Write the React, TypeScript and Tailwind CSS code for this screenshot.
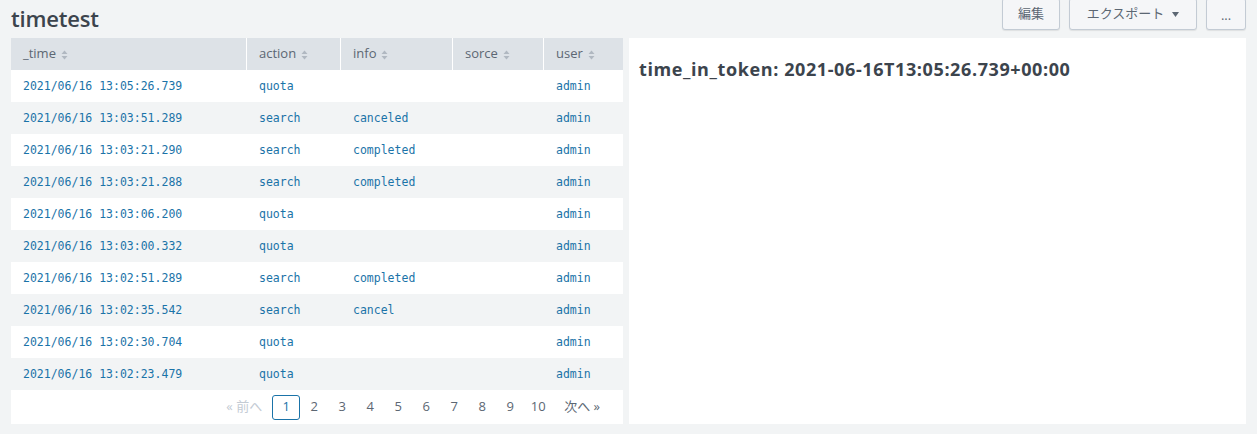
import React from "react";

const rows = [
  ["2021/06/16 13:05:26.739", "quota", "", "", "admin"],
  ["2021/06/16 13:03:51.289", "search", "canceled", "", "admin"],
  ["2021/06/16 13:03:21.290", "search", "completed", "", "admin"],
  ["2021/06/16 13:03:21.288", "search", "completed", "", "admin"],
  ["2021/06/16 13:03:06.200", "quota", "", "", "admin"],
  ["2021/06/16 13:03:00.332", "quota", "", "", "admin"],
  ["2021/06/16 13:02:51.289", "search", "completed", "", "admin"],
  ["2021/06/16 13:02:35.542", "search", "cancel", "", "admin"],
  ["2021/06/16 13:02:30.704", "quota", "", "", "admin"],
  ["2021/06/16 13:02:23.479", "quota", "", "", "admin"],
];

const cols = [
  { name: "_time", w: "w-[236px]" },
  { name: "action", w: "w-[94px]" },
  { name: "info", w: "w-[112px]" },
  { name: "sorce", w: "w-[91px]" },
  { name: "user", w: "flex-1" },
];

const sans = "font-['Open_Sans',sans-serif]";

function SortIcon() {
  return (
    <svg width="7" height="10" viewBox="0 0 7 10" className="ml-[5px] mt-[1px]">
      <path d="M3.5 0.5 L6.5 4 H0.5 Z" fill="#b0b8c1" />
      <path d="M3.5 9.5 L6.5 6 H0.5 Z" fill="#b0b8c1" />
    </svg>
  );
}

function Btn({ children, className = "" }: { children: React.ReactNode; className?: string }) {
  return (
    <button
      className={`h-[32px] -mt-[2px] flex items-center justify-center bg-[#f5f6f8] border border-[#c3cbd4] rounded-[3px] text-[13px] text-[#5c6773] shadow-[0_1px_1px_rgba(0,0,0,0.08)] font-['Open_Sans','Noto_Sans_CJK_JP',sans-serif] ${className}`}
    >
      {children}
    </button>
  );
}

export default function App() {
  return (
    <div className={`w-full h-[434px] bg-[#f2f4f5] overflow-hidden ${sans}`}>
      <div className="h-[38px] flex items-start justify-between px-[11px]">
        <h1 className="text-[22px] leading-[36px] text-[#3c444d] font-semibold tracking-[-0.2px]">timetest</h1>
        <div className="flex gap-[9px]">
          <Btn className="w-[58px]">編集</Btn>
          <Btn className="w-[128px]">
            エクスポート
            <svg width="7" height="5" viewBox="0 0 7 5" className="ml-[8px]">
              <path d="M0 0 H7 L3.5 5 Z" fill="#5c6773" />
            </svg>
          </Btn>
          <Btn className="w-[40px] pt-[4px]">...</Btn>
        </div>
      </div>
      <div className="flex gap-[6px] px-[11px]">
        <div className="w-[612px] h-[386px] flex flex-col">
          <div className="h-[32px] flex bg-[#dde2e7]">
            {cols.map((c, i) => (
              <div
                key={c.name}
                className={`${c.w} flex items-center pl-[12px] text-[13px] text-[#5c6773] ${i < 4 ? "border-r border-white" : ""}`}
              >
                {c.name}
                <SortIcon />
              </div>
            ))}
          </div>
          {rows.map((r, ri) => (
            <div key={ri} className={`h-[32px] flex items-center pt-[1px] ${ri % 2 === 0 ? "bg-white" : "bg-[#f2f4f5]"}`}>
              {r.map((v, ci) => (
                <div
                  key={ci}
                  className={`${cols[ci].w} pl-[12px] text-[11.5px] text-[#1a73a8] font-['DejaVu_Sans_Mono',monospace] ${ci < 4 ? "border-r border-transparent" : ""}`}
                >
                  {v}
                </div>
              ))}
            </div>
          ))}
          <div className="flex-1 bg-white flex items-center justify-end pr-[23px] text-[13px] text-[#5c6773]">
            <span className="text-[#c3cbd4] mr-[10px] font-['Open_Sans','Noto_Sans_CJK_JP',sans-serif]">« 前へ</span>
            <span className="w-[28px] h-[25px] flex items-center justify-center border border-[#1a73a8] rounded-[3px] text-[#1a73a8]">1</span>
            {[2, 3, 4, 5, 6, 7, 8, 9, 10].map((n) => (
              <span key={n} className="w-[28px] text-center">{n}</span>
            ))}
            <span className="ml-[12px] font-['Open_Sans','Noto_Sans_CJK_JP',sans-serif]">次へ »</span>
          </div>
        </div>
        <div className="flex-1 h-[386px] bg-white pl-[10px] pt-[18px]">
          <div className="text-[18px] font-bold tracking-[0.6px] text-[#3c444d]">time_in_token: 2021-06-16T13:05:26.739+00:00</div>
        </div>
      </div>
    </div>
  );
}
